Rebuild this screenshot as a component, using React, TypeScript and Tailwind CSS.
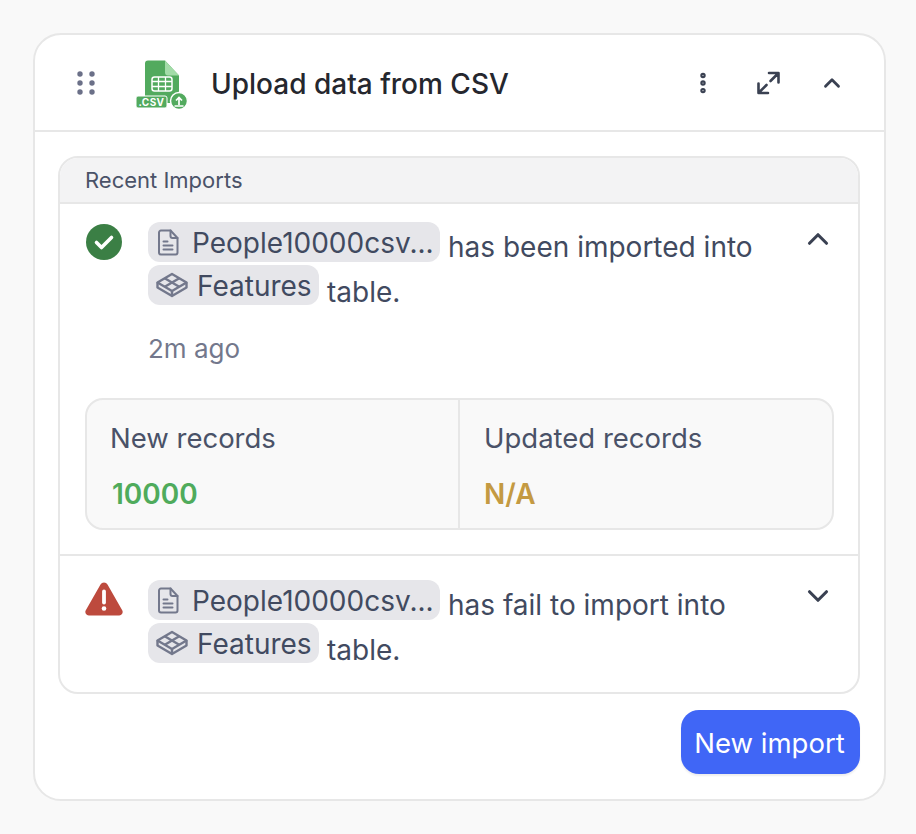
import { ChevronDown, ChevronUp, EllipsisVertical } from "lucide-react";

function GripIcon() {
  return (
    <svg width="18" height="24" viewBox="0 0 18 24" fill="#6b7088">
      {[3, 12, 21].map((y) => (
        <g key={y}>
          <circle cx="3" cy={y} r="2.7" />
          <circle cx="15" cy={y} r="2.7" />
        </g>
      ))}
    </svg>
  );
}

function ExpandIcon() {
  return (
    <svg width="26" height="26" viewBox="0 0 26 26" fill="none" stroke="#3a4152" strokeWidth="2.600" strokeLinecap="round" strokeLinejoin="round">
      <path d="M2.500 13.500V23h9.500M3 22.500l7.500-7.500" />
      <path d="M13 3h9.500v9.500M22 3.500 14.500 11" />
    </svg>
  );
}

function CsvIcon() {
  return (
    <svg width="54" height="52" viewBox="0 0 54 52">
      <g transform="translate(-3 1)">
        <path d="M12 3.500a3 3 0 0 1 3-3h17l14 15V43H15a3 3 0 0 1-3-3z" fill="#52aa5e" />
        <path d="M32 .5 46 15.500H35a3 3 0 0 1-3-3z" fill="#a3dca8" />
        <rect x="19" y="17" width="20" height="14" rx="2.500" fill="none" stroke="#fff" strokeWidth="1.500" />
        <path d="M19 21.500h20M19 26.500h20M25.500 17v14M32.500 17v14" stroke="#fff" strokeWidth="1.300" />
      </g>
      <rect x="0" y="37" width="31" height="12" rx="2" fill="#52aa5e" stroke="#fff" strokeWidth="1" />
      <text x="15.500" y="46.500" textAnchor="middle" fontFamily="Inter, sans-serif" fontSize="10" fontWeight="700" letterSpacing=".4" fill="#fff">.CSV</text>
      <circle cx="43" cy="42" r="8.500" fill="#52aa5e" stroke="#fff" strokeWidth="1.500" />
      <path d="M43 46v-7M40 41.500l3-3 3 3M38.500 47h9" fill="none" stroke="#fff" strokeWidth="1.700" />
    </svg>
  );
}

function FileIcon() {
  return (
    <svg width="22" height="27" viewBox="0 0 22 27" fill="none" stroke="#73788c" strokeWidth="2" strokeLinejoin="round" strokeLinecap="round" className="shrink-0">
      <path d="M4 1.500h9.500l7 7.500v14.500a2 2 0 0 1-2 2H4a2 2 0 0 1-2-2v-20a2 2 0 0 1 2-2z" />
      <path d="M13.500 1.500v5.500a2 2 0 0 0 2 2h5M6.500 12.500h4M6.500 16.500h9M6.500 20.500h9" />
    </svg>
  );
}

function TableIcon() {
  return (
    <svg width="32" height="26" viewBox="0 0 32 26" fill="none" stroke="#73788c" strokeWidth="2.400" strokeLinejoin="round" className="shrink-0">
      <path d="M16 2 30.500 10.500 16 19 1.500 10.500z" />
      <path d="M1.500 10.500v5L16 24l14.500-8.500v-5M16 19v5" />
      <path d="M8.700 6.200 23.200 14.800M23.300 6.200 8.800 14.800" />
    </svg>
  );
}

function CheckBadge() {
  return (
    <svg width="36" height="36" viewBox="0 0 36 36">
      <circle cx="18" cy="18" r="18" fill="#3b7f45" />
      <path d="M10.500 18.500l5 5 10-10" fill="none" stroke="#fff" strokeWidth="3.600" strokeLinecap="round" strokeLinejoin="round" />
    </svg>
  );
}

function WarnBadge() {
  return (
    <svg width="38" height="34" viewBox="0 0 38 34" className="-ml-px">
      <path d="M15.500 2.500a4 4 0 0 1 7 0l14.700 25.800a3.500 3.500 0 0 1-3 5.200H3.800a3.500 3.500 0 0 1-3-5.200z" fill="#bd4a3d" />
      <path d="M19 9.500v11" stroke="#fff" strokeWidth="3.800" strokeLinecap="round" />
      <circle cx="19" cy="26.500" r="2.300" fill="#fff" />
    </svg>
  );
}

function Chip({ icon, label, width, gap }: { icon: React.ReactNode; label: string; width: string; gap: string }) {
  return (
    <span className={`inline-flex h-10 shrink-0 items-center rounded-[12px] bg-[#e6e6ea] align-middle text-[#414a60] ${width}`}>
      {icon}
      <span className={`whitespace-nowrap pt-[2px] ${gap}`}>{label}</span>
    </span>
  );
}

function ImportMessage({ status, action, children }: { status: React.ReactNode; action: string; children?: React.ReactNode }) {
  return (
    <div className="flex items-start">
      <div className="flex w-[88px] shrink-0 pl-[26px] pt-[2px]">{status}</div>
      <div className="w-[661px] text-[28px] leading-[43px] text-[#414a60]">
        <div className="flex h-[43px] items-start">
          <Chip width="w-[292px] pl-[9px]" gap="ml-[13px]" icon={<FileIcon />} label="People10000csv..." />
          <span className="ml-2 mt-[5px] leading-[40px]">{action}</span>
        </div>
        <div className="flex h-[43px] items-start">
          <Chip width="w-[171px] pl-[8px]" gap="ml-[9px]" icon={<TableIcon />} label="Features" />
          <span className="ml-2 mt-[7px] leading-[40px]">table.</span>
        </div>
      </div>
      {children}
    </div>
  );
}

export default function App() {
  return (
    <div className="min-h-[834px] bg-[#f9f9f9] px-[33px] pt-[33px] font-['Inter',sans-serif]">
      <div className="h-[768px] w-[853px] rounded-[28px] border-2 border-[#e7e7e7] bg-white">
        {/* Header */}
        <div className="flex h-[97px] items-center border-b-2 border-[#e7e7e7]">
          <div className="ml-[42px] flex"><GripIcon /></div>
          <div className="ml-[41px] mt-[5px] flex"><CsvIcon /></div>
          <h1 className="ml-[21px] mt-[2px] text-[28px] font-medium text-[#25272e]">Upload data from CSV</h1>
          <div className="ml-auto flex items-center">
            <EllipsisVertical className="mr-[40px] text-[#3a4152]" size={26} strokeWidth={3} />
            <ExpandIcon />
            <ChevronUp className="ml-[37px] mr-[39px] text-[#3a4152]" size={26} strokeWidth={2.6} />
          </div>
        </div>

        {/* Recent imports */}
        <div className="ml-[23px] mr-[24px] mt-[24px] h-[538px] rounded-[20px] border-2 border-[#e7e7e7]">
          <div className="h-[46px] rounded-t-[18px] border-b-2 border-[#e7e7e7] bg-[#f3f3f4] pl-[25px] text-[22px] leading-[44px] text-[#4a5268]">
            Recent Imports
          </div>

          <div className="h-[352px] border-b-2 border-[#e7e7e7] pt-[18px]">
            <ImportMessage status={<CheckBadge />} action="has been imported into">
              <ChevronUp className="ml-[-8px] text-[#3a4152]" size={34} strokeWidth={2.2} />
            </ImportMessage>
            <div className="ml-[88px] mt-[23px] text-[26px] leading-[36px] text-[#73788c]">2m ago</div>
            <div className="ml-[25px] mr-[24px] mt-[31px] flex h-[132px] rounded-[18px] border-2 border-[#e7e7e7] bg-[#f9f9f9]">
              <div className="w-[373px] border-r-2 border-[#e7e7e7] pl-[23px] pt-[20px]">
                <div className="text-[27.500px] leading-[36px] text-[#4a5268]">New records</div>
                <div className="ml-[2px] mt-[20px] text-[28px] font-semibold leading-[36px] text-[#4fab5c]">10000</div>
              </div>
              <div className="flex-1 pl-[24px] pt-[20px]">
                <div className="text-[27.500px] leading-[36px] text-[#4a5268]">Updated records</div>
                <div className="mt-[20px] text-[28px] font-semibold leading-[36px] text-[#c49a42]">N/A</div>
              </div>
            </div>
          </div>

          <div className="pt-[24px]">
            <ImportMessage status={<WarnBadge />} action="has fail to import into">
              <ChevronDown className="ml-[-8px] mt-[-1px] text-[#3a4152]" size={34} strokeWidth={2.2} />
            </ImportMessage>
          </div>
        </div>

        <div className="mr-[24px] mt-[16px] flex justify-end">
          <button className="h-[64px] w-[179px] rounded-[18px] bg-[#4066f6] pr-[2px] pt-[3px] text-[27.500px] text-white shadow-[0_2px_2px_#eeeeee]">
            New import
          </button>
        </div>
      </div>
    </div>
  );
}
